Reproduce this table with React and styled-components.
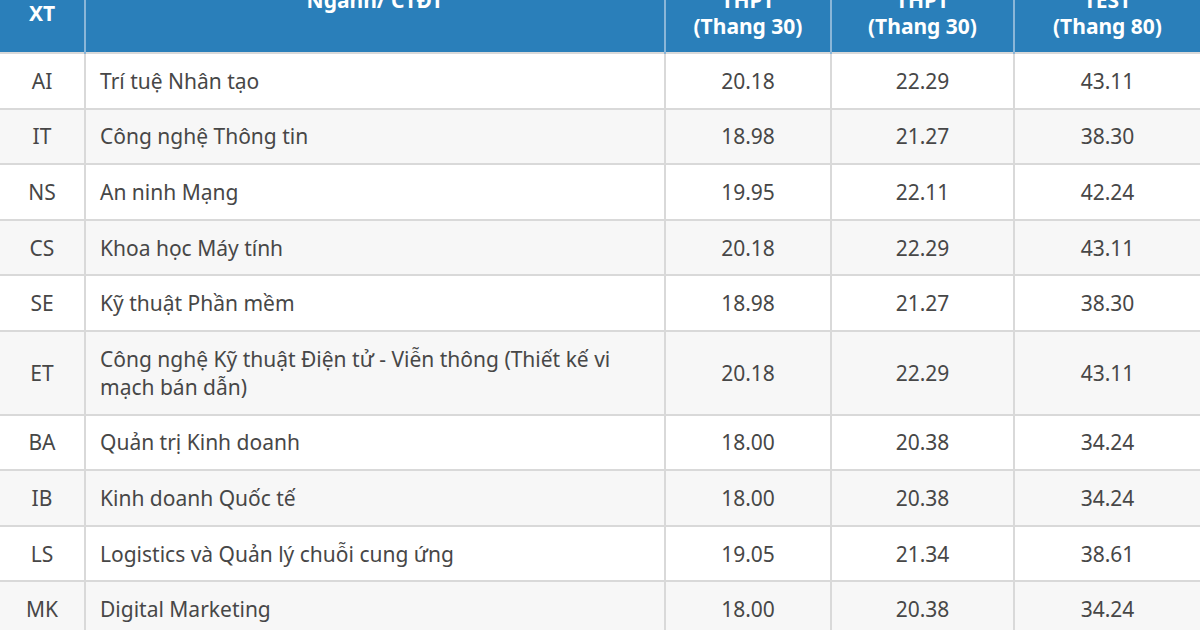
import styled, { createGlobalStyle } from 'styled-components'

const rows = [
    { code: 'AI', name: 'Trí tuệ Nhân tạo', a: '20.18', b: '22.29', c: '43.11' },
    { code: 'IT', name: 'Công nghệ Thông tin', a: '18.98', b: '21.27', c: '38.30' },
    { code: 'NS', name: 'An ninh Mạng', a: '19.95', b: '22.11', c: '42.24' },
    { code: 'CS', name: 'Khoa học Máy tính', a: '20.18', b: '22.29', c: '43.11' },
    { code: 'SE', name: 'Kỹ thuật Phần mềm', a: '18.98', b: '21.27', c: '38.30' },
    { code: 'ET', name: 'Công nghệ Kỹ thuật Điện tử - Viễn thông (Thiết kế vi mạch bán dẫn)', a: '20.18', b: '22.29', c: '43.11' },
    { code: 'BA', name: 'Quản trị Kinh doanh', a: '18.00', b: '20.38', c: '34.24' },
    { code: 'IB', name: 'Kinh doanh Quốc tế', a: '18.00', b: '20.38', c: '34.24' },
    { code: 'LS', name: 'Logistics và Quản lý chuỗi cung ứng', a: '19.05', b: '21.34', c: '38.61' },
    { code: 'MK', name: 'Digital Marketing', a: '18.00', b: '20.38', c: '34.24' },
]

const App = () => {
    return (
        <>
            <GlobalStyle />
            <Page>
                <Table>
                    <colgroup>
                        <col style={{ width: 85 }} />
                        <col style={{ width: 580 }} />
                        <col style={{ width: 166 }} />
                        <col style={{ width: 183 }} />
                        <col style={{ width: 186 }} />
                    </colgroup>
                    <thead>
                        <tr>
                            <Th>Mã<br />XT</Th>
                            <Th>Ngành/ CTĐT</Th>
                            <Th>Điểm chuẩn<br />THPT<br />(Thang 30)</Th>
                            <Th>Điểm sàn<br />THPT<br />(Thang 30)</Th>
                            <Th>Điểm<br />TEST<br />(Thang 80)</Th>
                        </tr>
                    </thead>
                    <tbody>
                        {rows.map((row, i) => (
                            <Row key={row.code} $alt={i % 2 === 1}>
                                <Td $center>{row.code}</Td>
                                <Td>{row.name}</Td>
                                <Td $center>{row.a}</Td>
                                <Td $center>{row.b}</Td>
                                <Td $center>{row.c}</Td>
                            </Row>
                        ))}
                    </tbody>
                </Table>
            </Page>
        </>
    );
}

export default App;

// STYLES
const GlobalStyle = createGlobalStyle`
    html, body {
        margin: 0;
        padding: 0;
        background: #ffffff;
    }
    body {
        font-family: "Noto Sans", "Open Sans", sans-serif;
    }
`

const Page = styled.div`
    width: 1200px;
    height: 630px;
    overflow: hidden;
`

const Table = styled.table`
    width: 1200px;
    table-layout: fixed;
    border-collapse: collapse;
    margin-top: -52px;
    font-size: 21px;
`

const Th = styled.th`
    background: #2a7fba;
    color: #ffffff;
    font-weight: 700;
    line-height: 26px;
    padding: 13px 8px;
    text-align: center;
    vertical-align: middle;
    border-left: 2px solid #8ab6d8;

    &:first-child{
        border-left: none;
    }
`

const Row = styled.tr`
    background: ${p => (p.$alt ? '#f7f7f7' : '#ffffff')};
`

const Td = styled.td`
    color: #474747;
    line-height: 28px;
    padding: 12.8px 14px;
    text-align: ${p => (p.$center ? 'center' : 'left')};
    vertical-align: middle;
    border: 2px solid #d9d9d9;

    &:first-child{
        border-left: none;
    }
    &:last-child{
        border-right: none;
    }
`
